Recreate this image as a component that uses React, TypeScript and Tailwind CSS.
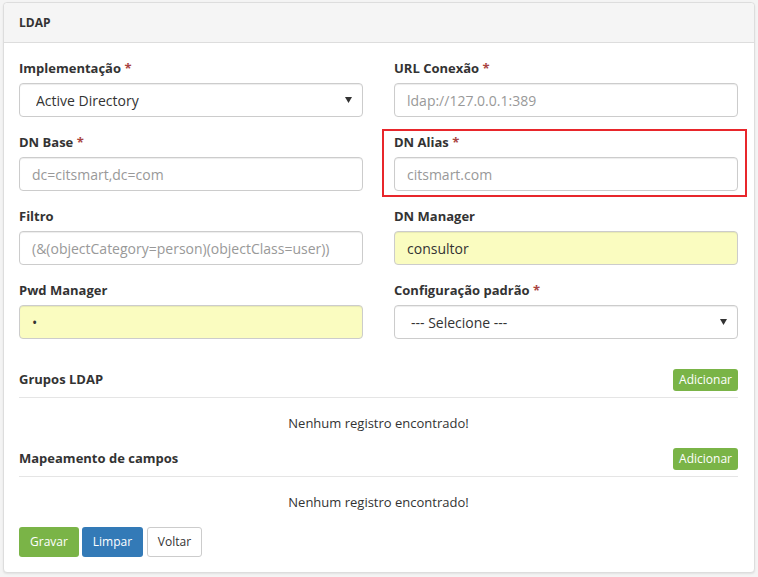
import React from 'react';

const font = { fontFamily: '"Open Sans", "Noto Sans", sans-serif' };

function Label({ text, required }: { text: string; required?: boolean }) {
  return (
    <div className="mb-[5px] h-[20px] text-[13px] leading-[20px] font-bold text-[#333]">
      {text}
      {required && <span className="text-[#a94442]"> *</span>}
    </div>
  );
}

function Field({
  label,
  required,
  value,
  placeholder,
  filled,
  select,
}: {
  label: string;
  required?: boolean;
  value?: string;
  placeholder?: string;
  filled?: boolean;
  select?: boolean;
}) {
  return (
    <div className="mb-[15px]">
      <Label text={label} required={required} />
      <div
        className={`flex h-[34px] items-center rounded-[4px] border border-[#ccc] shadow-[inset_0_1px_1px_rgba(0,0,0,0.075)] text-[14px] ${
          filled ? 'bg-[#fafcc0]' : 'bg-white'
        } ${select ? 'pl-[16px] pr-[8px]' : 'px-[12px]'}`}
      >
        <span className={`flex-1 truncate ${value ? 'text-[#333]' : 'text-[#999]'}`}>
          {value ?? placeholder}
        </span>
        {select && (
          <svg width="7" height="6" viewBox="0 0 7 6" className="mr-[2px]">
            <path d="M0 0 L7 0 L3.5 6 Z" fill="#333" />
          </svg>
        )}
      </div>
    </div>
  );
}

function Section({ title }: { title: string }) {
  return (
    <>
      <div className="mt-[15px] flex items-center justify-between border-b border-[#e5e5e5] pb-[6px]">
        <span className="text-[13px] font-bold text-[#333]">{title}</span>
        <button className="h-[22px] rounded-[3px] bg-[#7ab447] px-[6px] text-[12px] leading-[22px] text-white">
          Adicionar
        </button>
      </div>
      <div className="pt-[15px] text-center text-[13px] leading-[20px] text-[#333]">
        Nenhum registro encontrado!
      </div>
    </>
  );
}

export default function App() {
  return (
    <div className="h-[577px] w-[758px] bg-[#f4f4f4] pl-[3px] pr-[3px] pt-[2px]" style={font}>
      <div className="relative rounded-[4px] border border-[#ddd] bg-white shadow-[0_1px_2px_rgba(0,0,0,0.08)]">
        <div className="flex h-[40px] items-center rounded-t-[4px] border-b border-[#ddd] bg-[#f5f5f5] px-[15px]">
          <span className="text-[12px] font-bold text-[#333]">LDAP</span>
        </div>
        <div className="pb-[15px] pl-[15px] pr-[16px] pt-[15px]">
          <div className="grid grid-cols-2 gap-x-[31px]">
            <Field label="Implementação" required value="Active Directory" select />
            <Field label="URL Conexão" required placeholder="ldap://127.0.0.1:389" />
            <Field label="DN Base" required placeholder="dc=citsmart,dc=com" />
            <Field label="DN Alias" required placeholder="citsmart.com" />
            <Field label="Filtro" placeholder="(&(objectCategory=person)(objectClass=user))" />
            <Field label="DN Manager" value="consultor" filled />
            <Field label="Pwd Manager" value="•" filled />
            <Field label="Configuração padrão" required value="--- Selecione ---" select />
          </div>
          <Section title="Grupos LDAP" />
          <Section title="Mapeamento de campos" />
          <div className="mt-[15px] flex gap-[3px] text-[12px]">
            <button className="h-[30px] w-[60px] rounded-[3px] bg-[#7ab447] text-white">Gravar</button>
            <button className="h-[30px] w-[61px] rounded-[3px] bg-[#337ab7] text-white">Limpar</button>
            <button className="ml-[1px] h-[30px] w-[55px] rounded-[3px] border border-[#ccc] bg-white text-[#333]">
              Voltar
            </button>
          </div>
        </div>
        <div className="pointer-events-none absolute left-[378px] top-[126px] h-[68px] w-[365px] border-2 border-[#e8262b]" />
      </div>
    </div>
  );
}
